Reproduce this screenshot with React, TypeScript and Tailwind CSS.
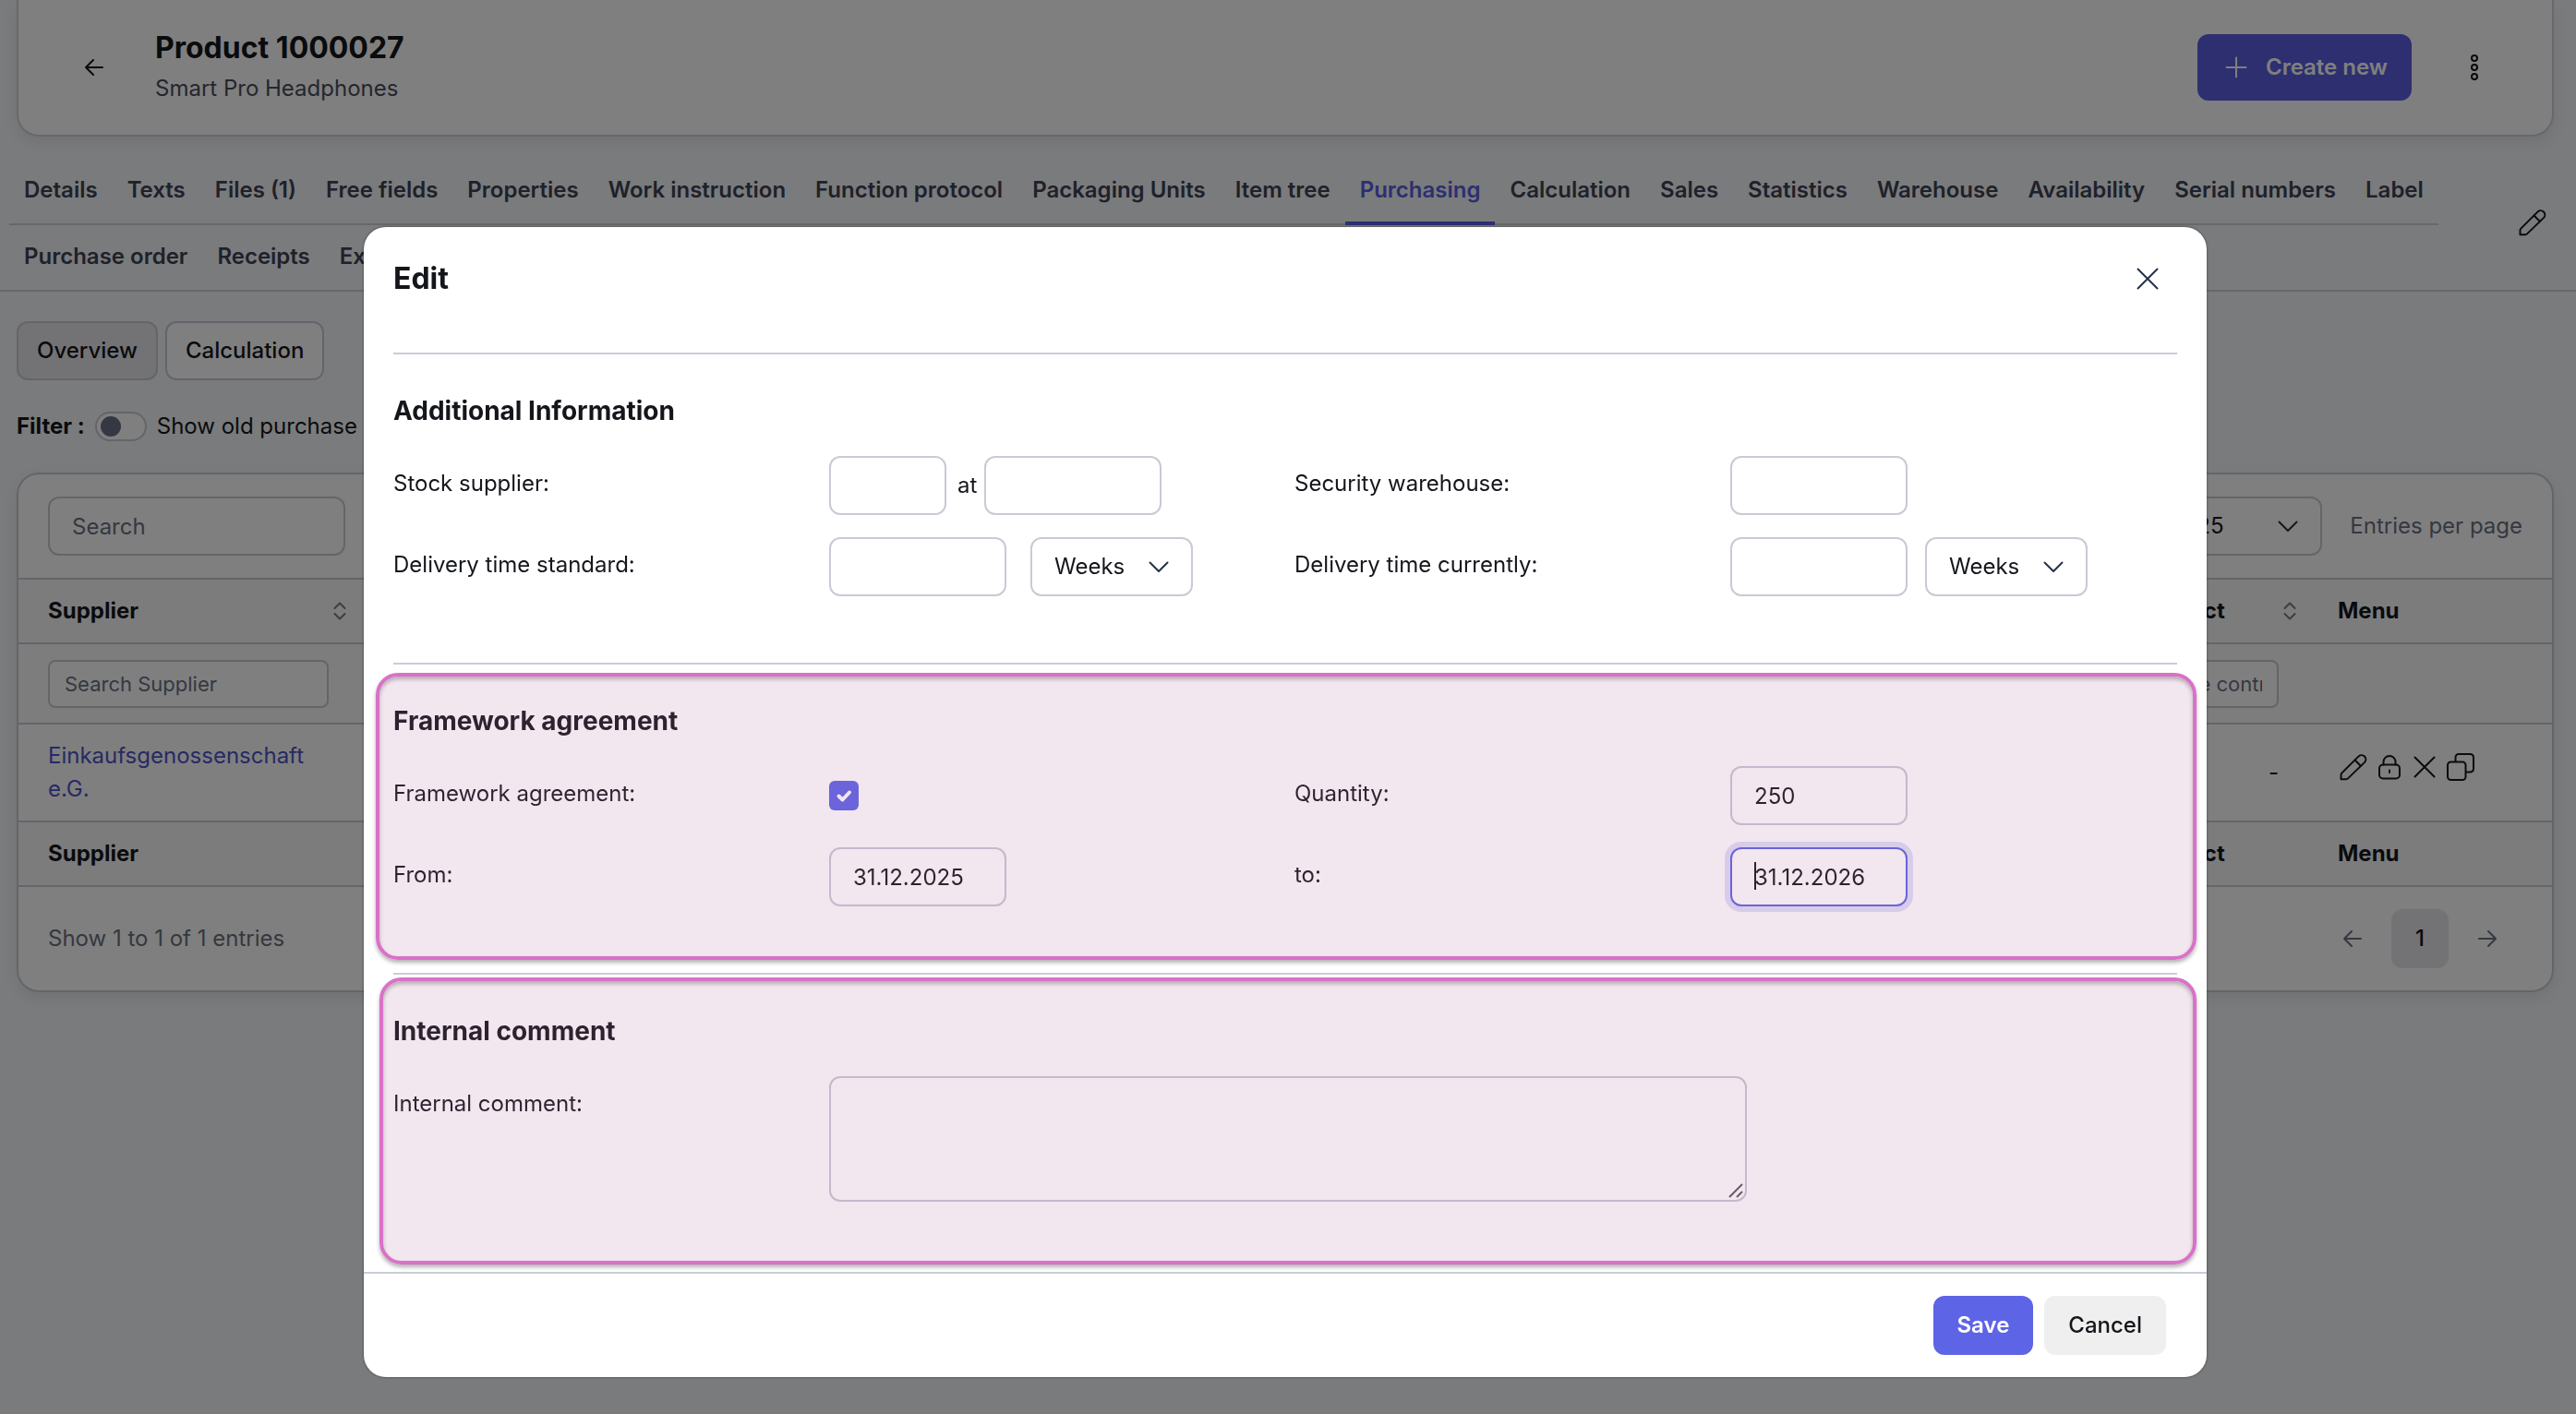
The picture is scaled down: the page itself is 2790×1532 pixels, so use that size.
import type { JSX, ReactNode } from "react";

const mainTabs: string[] = [
    "Details", "Texts", "Files (1)", "Free fields", "Properties", "Work instruction", "Function protocol",
    "Packaging Units", "Item tree", "Purchasing", "Calculation", "Sales", "Statistics", "Warehouse",
    "Availability", "Serial numbers", "Label",
];

const subTabs: string[] = ["Purchase order", "Receipts", "Extras"];

const fieldClass = "h-16 rounded-xl border-2 border-[#c9cad4] bg-white px-6 text-2xl text-[#14161b] outline-none";

const PencilIcon = (): JSX.Element => (
    <svg width="30" height="30" viewBox="0 0 30 30" fill="none" stroke="currentColor" strokeWidth="2" strokeLinejoin="round" strokeLinecap="round">
        <path d="M1.5 28.2V23.4Q1.5 22.4 2.3 21.6L20.6 3.4a4.6 4.6 0 0 1 6.5 6.5L9 27.4Q8.2 28.2 7 28.2Z" />
        <path d="M16.5 7.5l6.5 6.5" />
    </svg>
);

const LockIcon = (): JSX.Element => (
    <svg width="24" height="28" viewBox="0 0 24 28" fill="none" stroke="currentColor" strokeWidth="2" strokeLinecap="round">
        <rect x="1" y="11.5" width="22" height="15" rx="4" />
        <path d="M5.5 11.5V8.5a6.5 6.5 0 0 1 13 0V11.5M12 17.5V20" />
    </svg>
);

const CrossIcon = (): JSX.Element => (
    <svg width="24" height="24" viewBox="0 0 24 24" fill="none" stroke="currentColor" strokeWidth="2" strokeLinecap="round">
        <path d="M1.5 1.5l21 21M22.5 1.5l-21 21" />
    </svg>
);

const CopyIcon = (): JSX.Element => (
    <svg width="30" height="30" viewBox="0 0 30 30" fill="none" stroke="currentColor" strokeWidth="2">
        <rect x="1" y="9.5" width="19.5" height="19.5" rx="3.5" />
        <path d="M9.5 9.5V4.5a3.5 3.5 0 0 1 3.5-3.5H25.5A3.5 3.5 0 0 1 29 4.5V17a3.5 3.5 0 0 1-3.5 3.5H20.5" />
    </svg>
);

const ArrowIcon = ({ className = "" }: { className?: string }): JSX.Element => (
    <svg className={className} width="20" height="20" viewBox="0 0 20 20" fill="none" stroke="currentColor" strokeWidth="2" strokeLinecap="round" strokeLinejoin="round">
        <path d="M19 10H1M9 2L1 10l8 8" />
    </svg>
);

const SortIcon = (): JSX.Element => (
    <svg width="14" height="20" viewBox="0 0 14 20" fill="none" stroke="#777b88" strokeWidth="2" strokeLinecap="round" strokeLinejoin="round">
        <path d="M1.5 7L7 1.5L12.5 7M1.5 13L7 18.5L12.5 13" />
    </svg>
);

const ChevronIcon = (): JSX.Element => (
    <svg className="pointer-events-none absolute top-[26px] right-[26px]" width="22" height="14" viewBox="0 0 22 14" fill="none" stroke="#24324a" strokeWidth="2" strokeLinecap="round" strokeLinejoin="round">
        <path d="M1.5 1.5L11 11L20.5 1.5" />
    </svg>
);

const Tab = ({ label, active = false }: { label: string; active?: boolean }): JSX.Element => (
    <a
        href="#"
        className={`-mb-[2px] flex h-[72px] shrink-0 items-center whitespace-nowrap border-b-4 px-4 font-semibold ${active ? "border-[#5a5fe0] text-[#5a5fe0]" : "border-transparent text-[#3e4254]"}`}
    >
        {label}
    </a>
);

const WeeksSelect = ({ label }: { label: string }): JSX.Element => (
    <div className="relative">
        <select aria-label={label} className={`${fieldClass} w-[176px] appearance-none`}>
            <option>Weeks</option>
            <option>Days</option>
        </select>
        <ChevronIcon />
    </div>
);

const Field = ({ id, label, children }: { id: string; label: string; children: ReactNode }): JSX.Element => (
    <div className="flex items-start">
        <label htmlFor={id} className="w-[472px] shrink-0 pt-[14px] leading-8">{label}</label>
        {children}
    </div>
);

const Section = ({ title, children }: { title: string; children: ReactNode }): JSX.Element => (
    <section className="pt-[43px] pb-[72px]">
        <h3 className="mb-[31px] text-[28px] leading-9 font-bold">{title}</h3>
        {children}
    </section>
);

// marker drawn on top of a section
const Highlight = ({ className }: { className: string }): JSX.Element => (
    <div className={`pointer-events-none absolute rounded-3xl border-4 border-[#d971c8] bg-[rgba(176,103,158,0.165)] shadow-[0_3px_4px_rgba(0,0,0,0.3),inset_0_3px_4px_rgba(0,0,0,0.25)] ${className}`} />
);

const ProductHeader = (): JSX.Element => (
    <header className="mr-6 ml-[18px] flex h-[148px] items-center rounded-b-3xl border-2 border-t-0 border-[#d0d1d9] bg-white pr-[78px] pl-[72px] shadow-[0_6px_16px_rgba(0,0,0,0.08)]">
        <button type="button" aria-label="Back">
            <ArrowIcon />
        </button>
        <div className="ml-14 pb-[3px]">
            <h1 className="text-[32px] leading-10 font-bold">Product 1000027</h1>
            <p className="mt-2 leading-8 text-[#4a4d5c]">Smart Pro Headphones</p>
        </div>
        <button type="button" className="ml-auto flex h-[72px] items-center gap-5 rounded-xl bg-[#5a5fe0] pr-[26px] pl-[30px] font-semibold text-white">
            <svg width="24" height="24" viewBox="0 0 24 24" fill="none" stroke="currentColor" strokeWidth="2" strokeLinecap="round">
                <path d="M12 1.5V22.5M1.5 12H22.5" />
            </svg>
            Create new
        </button>
        <button type="button" aria-label="More" className="ml-[62px]">
            <svg width="12" height="32" viewBox="0 0 12 32" fill="none" stroke="currentColor" strokeWidth="2">
                <circle cx="6" cy="6" r="3" />
                <circle cx="6" cy="16" r="3" />
                <circle cx="6" cy="26" r="3" />
            </svg>
        </button>
    </header>
);

const SupplierTable = (): JSX.Element => (
    <div className="mt-[34px] mr-6 ml-[18px] overflow-hidden rounded-3xl border-2 border-[#c9cad4] bg-white shadow-[0_6px_16px_rgba(0,0,0,0.08)]">
        <div className="flex items-center justify-between border-b-2 border-[#c9cad4] py-6 pr-8 pl-8">
            <input aria-label="Search" placeholder="Search" className={`${fieldClass} w-[322px] placeholder:text-[#6b7080]`} />
            <div className="flex items-center gap-[30px]">
                <div className="relative">
                    <select id="pageSize" className={`${fieldClass} w-[162px] appearance-none`}>
                        <option>25</option>
                    </select>
                    <ChevronIcon />
                </div>
                <label htmlFor="pageSize" className="text-[#6b7080]">Entries per page</label>
            </div>
        </div>
        <table className="w-full table-fixed text-left">
            <colgroup>
                <col className="w-[371px]" />
                <col />
                <col className="w-[282px]" />
                <col className="w-[254px]" />
            </colgroup>
            <thead>
                <tr className="h-[69px] border-b-2 border-[#c9cad4] bg-[#f9f9fa]">
                    <th scope="col" className="pr-4 pl-8 font-bold">
                        <div className="flex items-center justify-between">Supplier <SortIcon /></div>
                    </th>
                    <td></td>
                    <th scope="col" className="pr-[23px] pl-1 font-bold">
                        <div className="flex items-center justify-between">Frame contract <SortIcon /></div>
                    </th>
                    <th scope="col" className="pl-[22px] font-bold">Menu</th>
                </tr>
                <tr className="h-[87px] border-b-2 border-[#c9cad4] bg-[#fbfbfc]">
                    <td className="pl-8">
                        <input aria-label="Search Supplier" placeholder="Search Supplier" className="block h-[52px] w-[304px] rounded-lg border-2 border-[#c9cad4] bg-white px-4 text-[22px] placeholder:text-[#6b7080]" />
                    </td>
                    <td></td>
                    <td className="pl-1">
                        <input aria-label="Search Frame contract" placeholder="Search Frame contract" className="block h-[52px] w-[236px] rounded-lg border-2 border-[#c9cad4] bg-white px-4 text-[22px] placeholder:text-[#6b7080]" />
                    </td>
                    <td></td>
                </tr>
            </thead>
            <tbody>
                <tr className="h-[106px] border-b-2 border-[#c9cad4]">
                    <td className="pr-4 pl-8 leading-9">
                        <a href="#" className="text-[#4f54c8]">Einkaufsgenossenschaft e.G.</a>
                    </td>
                    <td></td>
                    <td className="pr-[42px] text-right">-</td>
                    <td className="pb-3 pl-6">
                        <div className="flex items-center gap-3">
                            <button type="button" aria-label="Edit"><PencilIcon /></button>
                            <button type="button" aria-label="Lock"><LockIcon /></button>
                            <button type="button" aria-label="Delete" className="ml-0.5"><CrossIcon /></button>
                            <button type="button" aria-label="Copy"><CopyIcon /></button>
                        </div>
                    </td>
                </tr>
            </tbody>
            <tfoot>
                <tr className="h-[70px] border-b-2 border-[#c9cad4] bg-[#f9f9fa]">
                    <th scope="col" className="pl-8 font-bold">Supplier</th>
                    <td></td>
                    <th scope="col" className="pl-1 font-bold">Frame contract</th>
                    <th scope="col" className="pl-[22px] font-bold">Menu</th>
                </tr>
            </tfoot>
        </table>
        <div className="flex items-center justify-between py-6 pr-[60px] pl-8 text-[#6b7080]">
            <p>Show 1 to 1 of 1 entries</p>
            <nav className="flex items-center gap-8">
                <button type="button" aria-label="Previous page"><ArrowIcon /></button>
                <button type="button" className="h-16 w-[62px] rounded-xl bg-[#e6e6ea] font-medium text-[#14161b]">1</button>
                <button type="button" aria-label="Next page"><ArrowIcon className="rotate-180" /></button>
            </nav>
        </div>
    </div>
);

const EditDialog = (): JSX.Element => (
    <div className="fixed inset-0 flex items-start justify-center bg-black/50 pt-[246px] pr-[6px]">
        <div role="dialog" aria-labelledby="dialogTitle" className="relative w-full max-w-[1996px] rounded-3xl bg-white shadow-[0_0_3px_rgba(0,0,0,0.5)]">
            <div className="px-8">
                <div className="flex items-center justify-between border-b-2 border-[#c9cdd5] pt-9 pr-5 pb-[60px]">
                    <h2 id="dialogTitle" className="text-[32px] leading-10 font-bold">Edit</h2>
                    <button type="button" aria-label="Close" className="text-[#24324a]"><CrossIcon /></button>
                </div>
                <div className="divide-y-2 divide-[#c9cdd5]">
                    <Section title="Additional Information">
                        <div className="grid grid-cols-2 gap-x-5 gap-y-6">
                            <Field id="stock" label="Stock supplier:">
                                <div className="flex items-center">
                                    <input id="stock" className={`${fieldClass} w-[127px]`} />
                                    <label htmlFor="stockAt" className="mr-2 ml-3">at</label>
                                    <input id="stockAt" className={`${fieldClass} w-[192px]`} />
                                </div>
                            </Field>
                            <Field id="security" label="Security warehouse:">
                                <input id="security" className={`${fieldClass} w-[192px]`} />
                            </Field>
                            <Field id="standard" label="Delivery time standard:">
                                <div className="flex gap-[26px]">
                                    <input id="standard" className={`${fieldClass} w-[192px]`} />
                                    <WeeksSelect label="Standard unit" />
                                </div>
                            </Field>
                            <Field id="currently" label="Delivery time currently:">
                                <div className="flex gap-[19px]">
                                    <input id="currently" className={`${fieldClass} w-[192px]`} />
                                    <WeeksSelect label="Current unit" />
                                </div>
                            </Field>
                        </div>
                    </Section>
                    <Section title="Framework agreement">
                        <div className="grid grid-cols-2 gap-x-5 gap-y-6">
                            <Field id="framework" label="Framework agreement:">
                                <div className="relative mt-4 h-8 w-8">
                                    <input id="framework" type="checkbox" defaultChecked className="block h-8 w-8 appearance-none rounded-md bg-[#5e64e6]" />
                                    <svg className="pointer-events-none absolute inset-0" width="32" height="32" viewBox="0 0 32 32" fill="none" stroke="#fff" strokeWidth="4" strokeLinecap="round" strokeLinejoin="round">
                                        <path d="M10.5 16.5l4 4l7.500-8" />
                                    </svg>
                                </div>
                            </Field>
                            <Field id="quantity" label="Quantity:">
                                <input id="quantity" defaultValue="250" className={`${fieldClass} w-[192px]`} />
                            </Field>
                            <Field id="from" label="From:">
                                <input id="from" defaultValue="31.12.2025" className={`${fieldClass} w-[192px]`} />
                            </Field>
                            <Field id="to" label="to:">
                                <div className="relative">
                                    <input id="to" defaultValue="31.12.2026" className="block h-16 w-[192px] rounded-xl border-2 border-[#5e64e6] bg-white px-6 text-2xl ring-6 ring-[#5e64e6]/20 outline-none" />
                                    <span className="absolute top-4 left-[26px] h-[30px] w-[2px] bg-[#14161b]" />
                                </div>
                            </Field>
                        </div>
                    </Section>
                    <Section title="Internal comment">
                        <Field id="comment" label="Internal comment:">
                            <div className="relative w-[994px]">
                                <textarea id="comment" className="block h-[136px] w-full resize-none rounded-xl border-2 border-[#c9cad4] bg-white px-6 py-4 outline-none" />
                                <svg className="pointer-events-none absolute right-1 bottom-1" width="16" height="16" viewBox="0 0 16 16" stroke="#5c5c60" strokeWidth="2">
                                    <path d="M1 15L15 1M9 15l6-6" />
                                </svg>
                            </div>
                        </Field>
                    </Section>
                </div>
            </div>
            <div className="mt-1 flex justify-end gap-3 border-t-2 border-[#c9cdd5] py-6 pr-11">
                <button type="button" className="h-16 rounded-xl bg-[#5e64e6] px-[26px] font-semibold text-white">Save</button>
                <button type="button" className="h-16 rounded-xl bg-[#efefef] px-[26px] font-medium">Cancel</button>
            </div>
            <Highlight className="top-[483px] right-[11px] left-[13px] h-[311px]" />
            <Highlight className="top-[813px] right-[11px] left-[17px] h-[311px]" />
        </div>
    </div>
);

export default function App(): JSX.Element {
    return (
        <div className="min-h-screen bg-[#f4f6f9] font-['Inter',sans-serif] text-2xl text-[#14161b]">
            <ProductHeader />
            <div className="mt-6 flex items-center border-b-2 border-[#d0d1d9]">
                <div className="min-w-0 flex-1 pl-[10px]">
                    <nav className="flex w-max border-b-2 border-[#d0d1d9]">
                        {mainTabs.map((tab) => (
                            <Tab key={tab} label={tab} active={tab === "Purchasing"} />
                        ))}
                    </nav>
                    <nav className="flex">
                        {subTabs.map((tab) => (
                            <Tab key={tab} label={tab} />
                        ))}
                    </nav>
                </div>
                <button type="button" aria-label="Edit tabs" className="mr-8 pb-1"><PencilIcon /></button>
            </div>
            <div className="mt-8 ml-[18px] flex gap-2">
                <button type="button" className="h-16 rounded-xl border-2 border-[#c9cad4] bg-[#e6e6ea] px-5 font-medium">Overview</button>
                <button type="button" className="h-16 rounded-xl border-2 border-[#c9cad4] bg-white px-5 font-medium">Calculation</button>
            </div>
            <div className="mt-[34px] ml-[18px] flex h-8 items-center gap-[11px]">
                <span className="font-bold">Filter :</span>
                <input id="oldPurchase" type="checkbox" role="switch" className="h-8 w-14 appearance-none rounded-full border-2 border-[#c9cad4] bg-white before:mt-[3px] before:ml-1 before:block before:h-[22px] before:w-[22px] before:rounded-full before:bg-[#6a7186] before:content-['']" />
                <label htmlFor="oldPurchase">Show old purchase prices</label>
            </div>
            <SupplierTable />
            <EditDialog />
        </div>
    );
}
